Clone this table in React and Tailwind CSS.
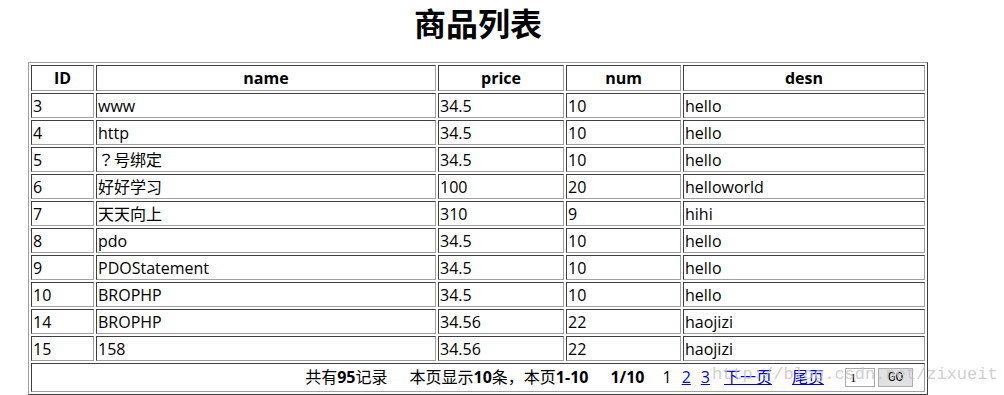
import React from 'react';

const rows = [
  ['3', 'www', '34.5', '10', 'hello'],
  ['4', 'http', '34.5', '10', 'hello'],
  ['5', '？号绑定', '34.5', '10', 'hello'],
  ['6', '好好学习', '100', '20', 'helloworld'],
  ['7', '天天向上', '310', '9', 'hihi'],
  ['8', 'pdo', '34.5', '10', 'hello'],
  ['9', 'PDOStatement', '34.5', '10', 'hello'],
  ['10', 'BROPHP', '34.5', '10', 'hello'],
  ['14', 'BROPHP', '34.56', '22', 'haojizi'],
  ['15', '158', '34.56', '22', 'haojizi'],
];

const cols = [
  ['ID', 'w-[63px]'],
  ['name', 'w-[340px]'],
  ['price', 'w-[126px]'],
  ['num', 'w-[115px]'],
  ['desn', 'w-[242px]'],
];

const cell = 'border border-t-[#3f3f3f] border-l-[#3f3f3f] border-r-[#a0a0a0] border-b-[#a0a0a0] p-[1px]';

export default function App() {
  return (
    <div
      className="relative w-[1004px] h-[395px] bg-white text-black overflow-hidden"
      style={{ fontFamily: '"Open Sans", "Noto Sans CJK JP", sans-serif' }}
    >
      <div className="ml-[28px] w-[900px]">
        <div
          className="h-[62px] pt-[2px] text-center text-[32px] leading-[40px] font-bold"
          style={{ fontFamily: '"Noto Sans CJK SC", sans-serif' }}
        >
          商品列表
        </div>
        <table className="w-[900px] table-fixed border-separate border-spacing-[2px] border border-t-[#a0a0a0] border-l-[#a0a0a0] border-r-[#3f3f3f] border-b-[#3f3f3f] text-[16px] leading-[21px]">
          <thead>
            <tr>
              {cols.map(([c, w]) => (
                <th key={c} className={`${cell} ${w} h-[26px] font-bold text-center`}>
                  {c}
                </th>
              ))}
            </tr>
          </thead>
          <tbody>
            {rows.map((r, i) => (
              <tr key={i}>
                {r.map((v, j) => (
                  <td key={j} className={`${cell} h-[25px] pt-[2px] pb-0 text-left whitespace-nowrap`}>
                    {v}
                  </td>
                ))}
              </tr>
            ))}
            <tr>
              <td colSpan={5} className={`${cell} h-[29px]`}>
                <div className="flex items-center justify-end pr-[10px] whitespace-nowrap">
                  <span>
                    共有<b>95</b>记录
                  </span>
                  <span className="ml-[22px]">
                    本页显示<b>10</b>条，本页<b>1-10</b>
                  </span>
                  <b className="ml-[22px]">1/10</b>
                  <span className="ml-[18px]">1</span>
                  <a href="#" className="ml-[10px] text-[#0000ee] underline">2</a>
                  <a href="#" className="ml-[10px] text-[#0000ee] underline">3</a>
                  <a href="#" className="ml-[14px] text-[#0000ee] underline">下一页</a>
                  <a href="#" className="ml-[20px] text-[#0000ee] underline">尾页</a>
                  <input
                    readOnly
                    value="1"
                    className="ml-[21px] w-[30px] h-[19px] border border-[#a9a9a9] bg-white px-[4px] text-[13px] leading-[17px]"
                    style={{ fontFamily: '"Liberation Serif", serif' }}
                  />
                  <button
                    className="ml-[3px] w-[35px] h-[19px] border border-[#adadad] bg-[#e1e1e1] text-[13px] leading-[17px]"
                    style={{ fontFamily: '"Liberation Mono", monospace' }}
                  >
                    GO
                  </button>
                </div>
              </td>
            </tr>
          </tbody>
        </table>
      </div>
      <div
        className="absolute left-[712px] top-[364px] text-[17px] leading-[22px] text-[#c4c4c4]/80 pointer-events-none"
        style={{ fontFamily: '"Liberation Mono", monospace' }}
      >
        http://blog.csdn.net/zixueit
      </div>
    </div>
  );
}
